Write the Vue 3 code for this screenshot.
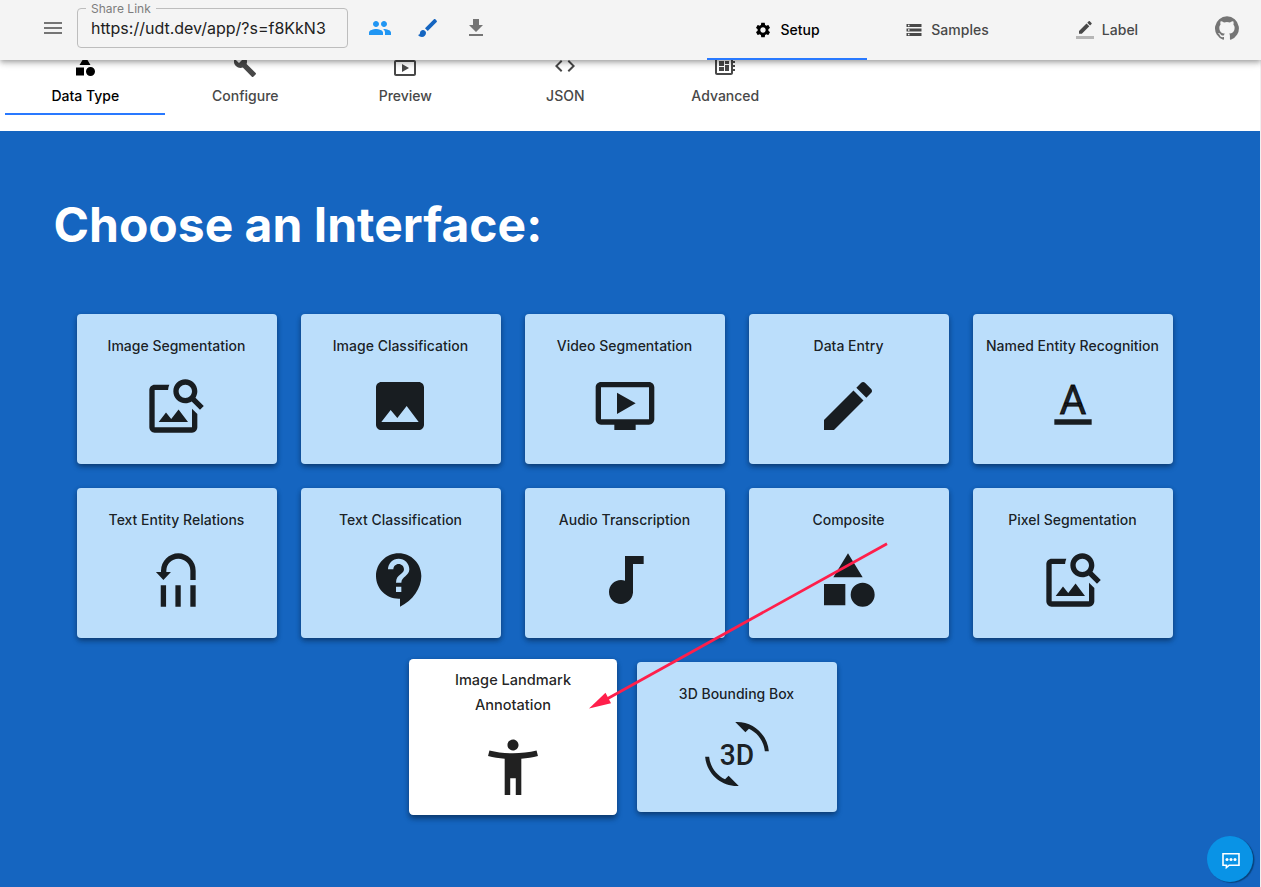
<script setup>
const icons = {
  menu: 'M3 18h18v-2H3v2zm0-5h18v-2H3v2zm0-7v2h18V6H3z',
  people: 'M16 11c1.66 0 2.99-1.34 2.99-3S17.66 5 16 5c-1.66 0-3 1.34-3 3s1.34 3 3 3zm-8 0c1.66 0 2.99-1.34 2.99-3S9.66 5 8 5C6.34 5 5 6.34 5 8s1.34 3 3 3zm0 2c-2.33 0-7 1.17-7 3.5V19h14v-2.5c0-2.33-4.67-3.5-7-3.5zm8 0c-.29 0-.62.02-.97.05 1.16.84 1.97 1.97 1.97 3.45V19h6v-2.5c0-2.33-4.67-3.5-7-3.5z',
  brush: 'M7 14c-1.66 0-3 1.34-3 3 0 1.31-1.16 2-2 2 .92 1.22 2.49 2 4 2 2.21 0 4-1.79 4-4 0-1.66-1.34-3-3-3zm13.71-9.37l-1.34-1.34c-.39-.39-1.02-.39-1.41 0L9 12.25 11.75 15l8.96-8.96c.39-.39.39-1.02 0-1.41z',
  download: 'M19 9h-4V3H9v6H5l7 7 7-7zM5 18v2h14v-2H5z',
  settings: 'M19.14 12.94c.04-.3.06-.61.06-.94 0-.32-.02-.64-.07-.94l2.03-1.58c.18-.14.23-.41.12-.61l-1.92-3.32c-.12-.22-.37-.29-.59-.22l-2.39.96c-.5-.38-1.03-.7-1.62-.94l-.36-2.54c-.04-.24-.24-.41-.48-.41h-3.84c-.24 0-.43.17-.47.41l-.36 2.54c-.59.24-1.13.57-1.62.94l-2.39-.96c-.22-.08-.47 0-.59.22L2.74 8.87c-.12.21-.08.47.12.61l2.03 1.58c-.05.3-.09.63-.09.94s.02.64.07.94l-2.03 1.58c-.18.14-.23.41-.12.61l1.92 3.32c.12.22.37.29.59.22l2.39-.96c.5.38 1.03.7 1.62.94l.36 2.54c.05.24.24.41.48.41h3.84c.24 0 .44-.17.47-.41l.36-2.54c.59-.24 1.13-.56 1.62-.94l2.39.96c.22.08.47 0 .59-.22l1.92-3.32c.12-.22.07-.47-.12-.61l-2.01-1.58zM12 15.6c-1.98 0-3.6-1.62-3.6-3.6s1.62-3.6 3.6-3.6 3.6 1.62 3.6 3.6-1.62 3.6-3.6 3.6z',
  storage: 'M2 20h20v-4H2v4zm2-3h2v2H4v-2zM2 4v4h20V4H2zm4 3H4V5h2v2zm-4 7h20v-4H2v4zm2-3h2v2H4v-2z',
  borderColor: 'M17.75 7L14 3.25l-10 10V17h3.75l10-10zm2.96-2.96c.39-.39.39-1.02 0-1.41L18.37.29c-.39-.39-1.02-.39-1.41 0L15 2.25 18.75 6l1.96-1.96z',
  github: 'M12 .3a12 12 0 0 0-3.8 23.38c.6.12.83-.26.83-.57L9 21.07c-3.34.72-4.04-1.61-4.04-1.61-.55-1.39-1.34-1.76-1.34-1.76-1.08-.74.09-.73.09-.73 1.2.09 1.84 1.24 1.84 1.24 1.07 1.83 2.8 1.3 3.49 1 .1-.78.42-1.31.76-1.61-2.67-.3-5.47-1.33-5.47-5.93 0-1.31.47-2.38 1.24-3.22-.14-.3-.54-1.52.1-3.18 0 0 1-.32 3.3 1.23a11.5 11.5 0 0 1 6 0c2.28-1.55 3.29-1.23 3.29-1.23.64 1.66.24 2.88.12 3.18a4.65 4.65 0 0 1 1.23 3.22c0 4.61-2.8 5.63-5.48 5.92.42.36.81 1.1.81 2.22l-.01 3.29c0 .31.2.69.82.57A12 12 0 0 0 12 .3',
  category: 'M12 2l-5.5 9h11zM3 13.5h8v8H3zM17.5 13a4.5 4.5 0 1 0 0 9 4.5 4.5 0 0 0 0-9z',
  build: 'M22.7 19l-9.1-9.1c.9-2.3.4-5-1.5-6.9-2-2-5-2.4-7.4-1.3L9 6 6 9 1.6 4.7C.4 7.1.9 10.1 2.9 12.1c1.9 1.9 4.6 2.4 6.9 1.5l9.1 9.1c.4.4 1 .4 1.4 0l2.3-2.3c.5-.4.5-1.1.1-1.4z',
  liveTv: 'M21 6h-7.59l3.29-3.29L16 2l-4 4-4-4-.71.71L10.59 6H3c-1.1 0-2 .89-2 2v12c0 1.1.9 2 2 2h18c1.1 0 2-.9 2-2V8c0-1.11-.9-2-2-2zm0 14H3V8h18v12zM9 10v8l7-4z',
  code: 'M9.4 16.6L4.8 12l4.6-4.6L8 6l-6 6 6 6 1.4-1.4zm5.2 0l4.6-4.6-4.6-4.6L16 6l6 6-6 6-1.4-1.4z',
  board: 'M22 9V7h-2V5c0-1.1-.9-2-2-2H4c-1.1 0-2 .9-2 2v14c0 1.1.9 2 2 2h14c1.1 0 2-.9 2-2v-2h2v-2h-2v-2h2v-2h-2V9h2zm-4 10H4V5h14v14zM6 13h5v4H6zm6-6h4v3h-4zM6 7h5v5H6zm6 4h4v6h-4z',
  imageSearch: 'M18 13v7H4V6h5.02c.05-.71.22-1.38.48-2H4c-1.1 0-2 .9-2 2v14c0 1.1.9 2 2 2h14c1.1 0 2-.9 2-2v-5l-2-2zm-1.5 5h-11l2.75-3.53 1.96 2.36 2.75-3.54zm2.8-9.11c.44-.7.7-1.51.7-2.39C20 4.01 17.99 2 15.5 2S11 4.01 11 6.5s2.01 4.5 4.49 4.5c.88 0 1.7-.26 2.39-.7L21 13.42 22.42 12 19.3 8.89zM15.5 9C14.12 9 13 7.88 13 6.5S14.12 4 15.5 4 18 5.12 18 6.5 16.88 9 15.5 9z',
  image: 'M21 19V5c0-1.1-.9-2-2-2H5c-1.1 0-2 .9-2 2v14c0 1.1.9 2 2 2h14c1.1 0 2-.9 2-2zM8.5 13.5l2.5 3.01L14.5 12l4.5 6H5l3.5-4.5z',
  video: 'M21 3H3c-1.11 0-2 .89-2 2v12c0 1.1.89 2 2 2h5v2h8v-2h5c1.1 0 1.99-.9 1.99-2L23 5c0-1.11-.9-2-2-2zm0 14H3V5h18v12zm-5-6l-7 4V7z',
  edit: 'M3 17.25V21h3.75L17.81 9.94l-3.75-3.75L3 17.25zM20.71 7.04c.39-.39.39-1.02 0-1.41l-2.34-2.34c-.39-.39-1.02-.39-1.41 0l-1.83 1.83 3.75 3.75 1.83-1.83z',
  underline: 'M5 17h14v2H5z',
  relations: 'M5.9 14h2v8h-2zM11.4 14h2v8h-2zM17 14h2v8h-2zM19 12h-2V8.5a4.5 4.5 0 0 0-9 0V9h1.73L6.9 12 4.1 9H6v-.5a6.5 6.5 0 0 1 13 0z',
  support: 'M11.5 2C6.81 2 3 5.81 3 10.5S6.81 19 11.5 19h.5v3c4.86-2.34 8-7 8-11.5C20 5.81 16.19 2 11.5 2zm1 14.5h-2v-2h2v2zm0-3.5h-2c0-3.25 3-3 3-5 0-1.1-.9-2-2-2s-2 .9-2 2h-2c0-2.21 1.79-4 4-4s4 1.79 4 4c0 2.5-3 2.75-3 5z',
  audio: 'M12 3v9.28c-.47-.17-.97-.28-1.5-.28C8.01 12 6 14.01 6 16.5S8.01 21 10.5 21c2.31 0 4.2-1.75 4.45-4H15V6h4V3h-7z',
  person: 'M20.5 6c-2.61.7-5.67 1-8.5 1s-5.89-.3-8.5-1L3 8c1.86.5 4 .83 6 1v13h2v-6h2v6h2V9c2-.17 4.14-.5 6-1l-.5-2zM12 6c1.1 0 2-.9 2-2s-.9-2-2-2-2 .9-2 2 .9 2 2 2z',
  rotate: 'M7.52 21.48C4.25 19.94 1.91 16.76 1.55 13H.05C.56 19.16 5.71 24 12 24l.66-.03-3.81-3.81-1.33 1.32zM12 0l-.66.03 3.81 3.81 1.33-1.33c3.27 1.55 5.61 4.72 5.96 8.48h1.5C23.44 4.84 18.29 0 12 0z',
}

const actions = [
  { icon: 'people', tone: 'sky' },
  { icon: 'brush', tone: 'navy' },
  { icon: 'download', tone: 'grey' },
]

const mainTabs = [
  { label: 'Setup', icon: 'settings', active: true },
  { label: 'Samples', icon: 'storage' },
  { label: 'Label', icon: 'borderColor', bar: true },
]

const setupTabs = [
  { label: 'Data Type', icon: 'category', active: true },
  { label: 'Configure', icon: 'build' },
  { label: 'Preview', icon: 'liveTv' },
  { label: 'JSON', icon: 'code' },
  { label: 'Advanced', icon: 'board' },
]

const cards = [
  { label: 'Image Segmentation', icon: 'imageSearch', nudge: true },
  { label: 'Image Classification', icon: 'image', nudge: true },
  { label: 'Video Segmentation', icon: 'video' },
  { label: 'Data Entry', icon: 'edit', nudge: true },
  { label: 'Named Entity Recognition', icon: 'underline', glyph: 'A' },
  { label: 'Text Entity Relations', icon: 'relations' },
  { label: 'Text Classification', icon: 'support', nudge: true },
  { label: 'Audio Transcription', icon: 'audio' },
  { label: 'Composite', icon: 'category', nudge: true },
  { label: 'Pixel Segmentation', icon: 'imageSearch' },
  { label: 'Image Landmark Annotation', icon: 'person', hovered: true },
  { label: '3D Bounding Box', icon: 'rotate', glyph: '3D' },
]
</script>

<template>
  <div class="page">
    <header class="appbar">
      <svg class="icon grey menu" viewBox="0 0 24 24"><path :d="icons.menu" /></svg>
      <fieldset class="share">
        <legend>Share Link</legend>
        <span class="url">https://udt.dev/app/?s=f8KkN3</span>
      </fieldset>
      <div class="actions">
        <svg v-for="a in actions" :key="a.icon" class="icon" :class="a.tone" viewBox="0 0 24 24">
          <path :d="icons[a.icon]" />
        </svg>
      </div>
      <nav class="main-tabs">
        <a v-for="t in mainTabs" :key="t.label" class="main-tab" :class="{ active: t.active }">
          <svg class="small-icon" viewBox="0 0 24 24">
            <path :d="icons[t.icon]" />
            <path v-if="t.bar" d="M0 20h24v4H0z" fill-opacity=".36" />
          </svg>
          <span>{{ t.label }}</span>
        </a>
      </nav>
      <svg class="icon grey github" viewBox="0 0 24 24"><path :d="icons.github" /></svg>
    </header>

    <nav class="setup-tabs">
      <a v-for="t in setupTabs" :key="t.label" class="setup-tab" :class="{ active: t.active }">
        <svg class="icon" viewBox="0 0 24 24"><path :d="icons[t.icon]" /></svg>
        <span>{{ t.label }}</span>
      </a>
    </nav>

    <main class="chooser">
      <h1>Choose an Interface:</h1>
      <div class="cards">
        <button v-for="c in cards" :key="c.label" class="card" :class="{ hovered: c.hovered, nudge: c.nudge }">
          <span class="title">{{ c.label }}</span>
          <svg class="big-icon" viewBox="0 0 24 24">
            <path :d="icons[c.icon]" />
            <text v-if="c.glyph === 'A'" class="letter thin" x="12" y="15" text-anchor="middle" font-size="15.4">A</text>
            <text v-if="c.glyph === '3D'" class="letter" x="12" y="16.05" text-anchor="middle" font-size="11.3" textLength="12.9" lengthAdjust="spacingAndGlyphs">3D</text>
          </svg>
        </button>
      </div>
    </main>

    <svg class="pointer" width="304" height="172" viewBox="586 540 304 172">
      <path class="shaft" d="M887 543.7L606 699.5" />
      <path class="head" d="M589 708.6L605.5 692.8L611 703.2z" />
    </svg>

    <div class="chat">
      <svg width="20" height="18" viewBox="0 0 20 18">
        <path d="M2 1.8h16v11.4H8.2L5.4 15.6V13.2H2z" />
        <circle cx="6" cy="7.6" r="1.5" />
        <circle cx="10" cy="7.6" r="1.5" />
        <circle cx="14" cy="7.6" r="1.5" />
      </svg>
    </div>
  </div>
</template>

<style>
body {
  background: #f1f1f1;
  overflow: hidden;
}
</style>

<style scoped>
.page {
  position: relative;
  width: 1261px;
  height: 887px;
  overflow: hidden;
  font-family: Inter, "Liberation Sans", sans-serif;
}
.appbar {
  position: relative;
  z-index: 2;
  box-sizing: border-box;
  display: flex;
  align-items: center;
  height: 60px;
  padding: 0 22px 4px 41px;
  background: #f4f4f4;
  box-shadow: 0 2px 4px -1px rgba(0, 0, 0, 0.2), 0 4px 5px 0 rgba(0, 0, 0, 0.14), 0 1px 10px 0 rgba(0, 0, 0, 0.12);
}
.icon {
  flex: none;
  width: 24px;
  height: 24px;
  fill: currentColor;
}
.grey { color: #757575; }
.sky { color: #2196f3; }
.navy { color: #1565c0; }
.share {
  box-sizing: border-box;
  width: 271px;
  height: 45px;
  margin: -6px 0 0 12px;
  padding: 0 13px;
  border: 1px solid #bdbdbd;
  border-radius: 4px;
}
.share legend {
  height: 12px;
  margin-left: -5px;
  padding: 0 5px;
  font-size: 12px;
  line-height: 12px;
  letter-spacing: 0.02px;
  color: #7d7d7d;
}
.url {
  display: block;
  font-size: 16px;
  line-height: 20px;
  margin-top: 3px;
  white-space: nowrap;
  color: #212121;
}
.actions {
  display: flex;
  gap: 24px;
  margin-left: 20px;
}
.main-tabs {
  display: flex;
  align-self: flex-start;
  margin-left: auto;
}
.main-tab {
  box-sizing: border-box;
  display: flex;
  align-items: center;
  justify-content: center;
  gap: 8px;
  width: 160px;
  height: 60px;
  font-size: 14px;
  font-weight: 500;
  line-height: 18px;
  color: #484848;
  border-top: 2px solid transparent;
  border-bottom: 2px solid transparent;
}
.main-tab span { margin-bottom: 1px; }
.main-tab.active {
  color: #000;
  border-bottom-color: #2979ff;
}
.small-icon {
  width: 18px;
  height: 18px;
  fill: currentColor;
}
.github { margin-left: 28px; }
.setup-tabs {
  display: flex;
  width: 1255px;
  height: 88px;
  margin-top: -17px;
  padding-left: 5px;
  background: #fff;
}
.setup-tab {
  box-sizing: border-box;
  display: flex;
  flex-direction: column;
  align-items: center;
  gap: 6px;
  width: 160px;
  height: 72px;
  padding-top: 11px;
  font-size: 14px;
  font-weight: 500;
  line-height: 24px;
  color: #484848;
  border-bottom: 2px solid transparent;
}
.setup-tab span { padding-left: 0.6px; }
.setup-tab.active {
  color: #000;
  border-bottom-color: #2979ff;
}
.chooser {
  box-sizing: border-box;
  width: 1260px;
  height: 756px;
  padding: 65px 53px 0 53px;
  background: #1565c0;
}
h1 {
  margin: 0;
  padding-left: 0.5px;
  font-size: 48px;
  font-weight: 700;
  line-height: 58px;
  color: #fff;
}
.cards {
  display: flex;
  flex-wrap: wrap;
  justify-content: center;
  gap: 24px;
  width: 1144px;
  margin: 60px 0 0 0;
}
.card {
  box-sizing: border-box;
  display: flex;
  flex-direction: column;
  align-items: center;
  justify-content: center;
  width: 200px;
  height: 150px;
  padding: 0 8px 6px 7px;
  border: 0;
  border-radius: 4px;
  font: 500 14px/24px Inter, "Liberation Sans", sans-serif;
  color: rgba(0, 0, 0, 0.87);
  background: #bbdefb;
  box-shadow: 0 3px 5px -1px rgba(0, 0, 0, 0.2), 0 3px 6px 0 rgba(0, 0, 0, 0.2), 0 1px 5px 0 rgba(0, 0, 0, 0.12);
}
.card.hovered {
  background: #fff;
  transform: scale(1.04);
}
.title {
  max-width: 150px;
}
.hovered .title { padding-left: 1px; }
.card:not(.hovered) .title {
  max-width: none;
  white-space: nowrap;
}
.big-icon {
  width: 64px;
  height: 64px;
  margin-top: 16px;
  fill: currentColor;
}
.nudge .big-icon { margin-right: 1px; }
.letter {
  font-family: Roboto, sans-serif;
  font-weight: 500;
}
.letter.thin {
  font-weight: 400;
  stroke: currentColor;
  stroke-width: 0.3;
}
.pointer {
  position: absolute;
  z-index: 3;
  left: 586px;
  top: 540px;
}
.shaft {
  fill: none;
  stroke: #ff1f4b;
  stroke-width: 2.7;
}
.head { fill: #ff1f4b; }
.chat {
  position: absolute;
  z-index: 3;
  left: 1207px;
  top: 836px;
  display: flex;
  align-items: center;
  justify-content: center;
  width: 46px;
  height: 46px;
  padding-top: 3px;
  padding-left: 1px;
  box-sizing: border-box;
  border-radius: 50%;
  background: #0993e6;
  box-shadow: 1.5px 1px 1px rgba(0, 50, 90, 0.65);
}
.chat path {
  fill: none;
  stroke: #fff;
  stroke-width: 1.6;
}
.chat circle { fill: #fff; }
</style>
